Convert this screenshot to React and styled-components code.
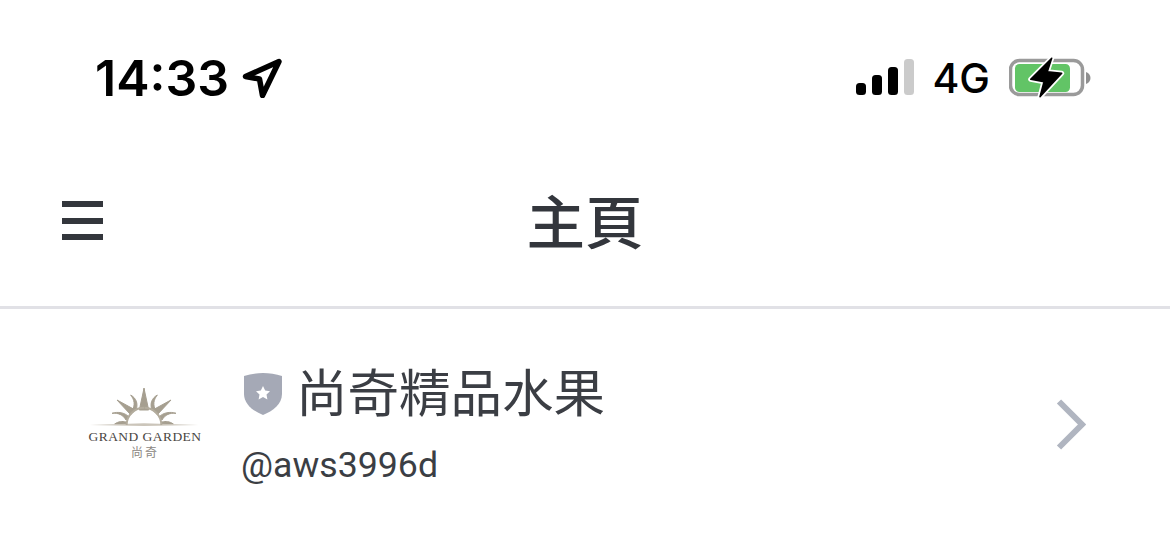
import React from "react";
import styled, { createGlobalStyle } from "styled-components";

const Global = createGlobalStyle`
  html, body { margin: 0; padding: 0; background: #fff; }
  body { font-family: "Roboto", "Noto Sans CJK TC", sans-serif; overflow: hidden; }
`;

const Page = styled.div`
  width: 1170px;
  height: 559px;
  background: #fff;
`;

const StatusBar = styled.div`
  height: 156px;
  box-sizing: border-box;
  padding: 52px 79px 0 95px;
  display: flex;
  justify-content: space-between;
  align-items: flex-start;
`;

const Left = styled.div`
  display: flex;
  align-items: center;
  gap: 13px;
`;

const Right = styled.div`
  display: flex;
  align-items: center;
  height: 52px;
`;

const Time = styled.span`
  font-family: "Inter", sans-serif;
  font-weight: 600;
  font-size: 50px;
  line-height: 52px;
  color: #000;
`;

const Network = styled.span`
  font-family: "Inter", sans-serif;
  font-weight: 500;
  font-size: 41px;
  line-height: 52px;
  color: #000;
  margin: 0 19px 0 18px;
`;

const NavBar = styled.div`
  height: 153px;
  box-sizing: border-box;
  padding: 0 62px 21px;
  border-bottom: 3px solid #e1e1e6;
  display: grid;
  grid-template-columns: 1fr auto 1fr;
  align-items: center;
`;

const Burger = styled.div`
  width: 41px;
  display: flex;
  flex-direction: column;
  gap: 10.500px;
  span {
    display: block;
    height: 6px;
    background: #33363c;
  }
`;

const Title = styled.h1`
  margin: 0 0 4px;
  font-family: "Noto Sans CJK TC", sans-serif;
  font-weight: 500;
  font-size: 58.500px;
  line-height: 62px;
  color: #33363c;
`;

const AccountRow = styled.div`
  display: flex;
  align-items: center;
  padding: 53px 84px 0 84px;
`;

const Logo = styled.div`
  width: 122px;
  display: flex;
  flex-direction: column;
  align-items: center;
  margin: 0 35px 5px 0;
`;

const LogoName = styled.span`
  font-family: "Liberation Serif", serif;
  font-size: 13.500px;
  line-height: 14px;
  letter-spacing: 0.45px;
  color: #4a4643;
  white-space: nowrap;
  margin-top: 4px;
`;

const LogoHan = styled.span`
  font-family: "Noto Sans CJK TC", sans-serif;
  font-size: 12px;
  line-height: 13px;
  letter-spacing: 2px;
  color: #8b8782;
  margin-top: 1px;
`;

const Info = styled.div`
  flex: 1;
  display: flex;
  flex-direction: column;
  gap: 19px;
`;

const NameLine = styled.div`
  height: 62px;
  display: flex;
  align-items: flex-start;
  gap: 14px;
  padding-left: 3px;
`;

const ShieldIcon = styled.svg`
  margin-top: 11px;
`;

const Name = styled.span`
  font-family: "Noto Sans CJK TC", sans-serif;
  font-size: 51.500px;
  line-height: 56px;
  color: #3b3e44;
`;

const Handle = styled.span`
  font-family: "Roboto", sans-serif;
  font-size: 35.700px;
  line-height: 44px;
  color: #3b3e44;
`;

const Arrow = () => (
  <svg width="30" height="52" viewBox="0 0 30 52" fill="none" aria-hidden="true">
    <path d="M3 2.500 L26 25.500 L3 48.500" stroke="#b0b5c0" strokeWidth="6" />
  </svg>
);

const LocationArrow = () => (
  <svg width="40" height="40" viewBox="0 0 40 40" fill="none" aria-hidden="true">
    <path
      d="M3.500 18.500 L37 3.500 L20.500 37.500 L17.500 21 Z"
      stroke="#000"
      strokeWidth="5.500"
      strokeLinejoin="round"
    />
  </svg>
);

const SignalIcon = styled.svg`
  margin-top: -2px;
`;

const Signal = () => (
  <SignalIcon width="58" height="36" viewBox="0 0 58 36" aria-hidden="true">
    <rect x="0" y="24" width="10" height="12" rx="3.500" fill="#000" />
    <rect x="16" y="16" width="10" height="20" rx="3.500" fill="#000" />
    <rect x="32" y="8" width="10" height="28" rx="3.500" fill="#000" />
    <rect x="48" y="0" width="10" height="36" rx="3.500" fill="#cbcbcb" />
  </SignalIcon>
);

const BOLT = "M42.700 2.300 L21.700 23.300 L35 25.700 L31 40.700 L52.700 17.300 L38.300 15.700 Z";

const Battery = () => (
  <svg width="82" height="44" viewBox="0 0 82 44" aria-hidden="true">
    <rect x="1.500" y="4.500" width="72" height="34" rx="9" fill="none" stroke="#9a9a9a" strokeWidth="3.500" />
    <rect x="6" y="8" width="55" height="28" rx="4.500" fill="#62c466" />
    <path d="M77 16 C80 17 81.500 19.500 81.500 22 C81.500 24.500 80 27 77 28 Z" fill="#8f8f8f" />
    <path d={BOLT} fill="#fff" stroke="#fff" strokeWidth="5" strokeLinejoin="round" />
    <path d={BOLT} fill="#000" stroke="#000" strokeWidth="1.500" strokeLinejoin="round" />
  </svg>
);

const Shield = () => (
  <ShieldIcon width="38" height="42" viewBox="0 0 38 42" aria-hidden="true">
    <path
      d="M0 3 C6 1 13 0 19 0 C25 0 32 1 38 3 V21 C38 31 29 38 19 42 C9 38 0 31 0 21 Z"
      fill="#a5a9b6"
    />
    <path
      d="M19 13 L21.200 17.600 L26 18.200 L22.500 21.500 L23.400 26.500 L19 24 L14.600 26.500 L15.500 21.500 L12 18.200 L16.800 17.600 Z"
      fill="#fff"
    />
  </ShieldIcon>
);

// half of the sun, the other half is the same thing mirrored around x=222
const SunHalf = () => (
  <>
    <path d="M222 55 L236 120 L222 120 Z" />
    <path d="M303 90 L262 134 L248 120 Z" />
    <path d="M262 75 C250 90 248 105 258 124 L245 118 C240 100 245 85 262 75 Z" />
    <path d="M318 130 C300 128 285 134 276 150 L268 140 C280 128 300 124 318 130 Z" />
    <path d="M310 162 C298 154 288 153 276 156 L278 162 Z" />
    <path d="M222 160 L385 165 L222 168 Z" fill="#cbc5ba" stroke="none" />
    <path d="M222 113 A52 52 0 0 1 274 165" fill="none" stroke="#b3ac9d" strokeWidth="6" />
  </>
);

const Sun = () => (
  <svg
    width="122"
    height="40"
    viewBox="42 48 366 120"
    fill="#a69f90"
    stroke="#a69f90"
    strokeWidth="3"
    aria-hidden="true"
  >
    <SunHalf />
    <g transform="translate(444 0) scale(-1 1)">
      <SunHalf />
    </g>
  </svg>
);

export default function App() {
  return (
    <Page>
      <Global />
      <StatusBar>
        <Left>
          <Time>14:33</Time>
          <LocationArrow />
        </Left>
        <Right>
          <Signal />
          <Network>4G</Network>
          <Battery />
        </Right>
      </StatusBar>
      <NavBar>
        <Burger>
          <span />
          <span />
          <span />
        </Burger>
        <Title>主頁</Title>
      </NavBar>
      <AccountRow>
        <Logo>
          <Sun />
          <LogoName>GRAND GARDEN</LogoName>
          <LogoHan>尚奇</LogoHan>
        </Logo>
        <Info>
          <NameLine>
            <Shield />
            <Name>尚奇精品水果</Name>
          </NameLine>
          <Handle>@aws3996d</Handle>
        </Info>
        <Arrow />
      </AccountRow>
    </Page>
  );
}
